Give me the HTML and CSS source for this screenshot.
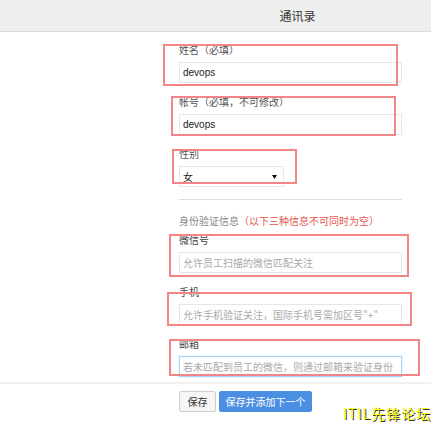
FILE: index.html
```html
<!DOCTYPE html>
<html lang="zh-CN">
<head>
<meta charset="utf-8">
<title>通讯录</title>
<link rel="stylesheet" href="styles.css">
</head>
<body>
<header class="topbar"><span class="title">通讯录</span></header>
<main class="form">
  <div class="group">
    <div class="mark m1"></div>
    <div class="label">姓名（必填）</div>
    <div class="input">devops</div>
  </div>
  <div class="group">
    <div class="mark m2"></div>
    <div class="label">帐号（必填，不可修改）</div>
    <div class="input">devops</div>
  </div>
  <div class="group">
    <div class="mark m3"></div>
    <div class="label">性别</div>
    <div class="select"><span>女</span><svg class="caret" width="5" height="4" viewBox="0 0 5 4"><path d="M0 0H5L2.5 4Z" fill="#111"/></svg></div>
  </div>
  <hr class="divider">
  <div class="section">身份验证信息<span class="warn">（以下三种信息不可同时为空）</span></div>
  <div class="group">
    <div class="mark m4"></div>
    <div class="label dark">微信号</div>
    <div class="input ph">允许员工扫描的微信匹配关注</div>
  </div>
  <div class="group">
    <div class="mark m5"></div>
    <div class="label dark">手机</div>
    <div class="input ph">允许手机验证关注，国际手机号需加区号"+"</div>
  </div>
  <div class="group">
    <div class="mark m6"></div>
    <div class="label dark">邮箱</div>
    <div class="input ph focus">若未匹配到员工的微信，则通过邮箱来验证身份</div>
  </div>
</main>
<footer class="footer">
  <button class="btn">保存</button>
  <button class="btn primary">保存并添加下一个</button>
</footer>
<div class="watermark">ITIL先锋论坛</div>
</body>
</html>
```
FILE: styles.css
```css
* { box-sizing: border-box; }
html, body { margin: 0; padding: 0; }
body {
  width: 431px;
  height: 425px;
  overflow: hidden;
  background: #fff;
  font-family: "Liberation Sans", "Noto Sans CJK SC", sans-serif;
  font-size: 10px;
  color: #333;
  position: relative;
}
.topbar {
  height: 32px;
  background: #efefef;
  border-bottom: 1px solid #dcdcdc;
  display: flex;
  align-items: center;
  justify-content: center;
  padding-left: 164px;
}
.title {
  font-family: "Noto Sans CJK SC", sans-serif;
  font-size: 12px;
  color: #333;
  margin-top: -1px;
}
.form {
  margin-left: 179px;
  width: 223px;
  padding-top: 11px;
}
.group {
  position: relative;
  margin-bottom: 12px;
}
.label {
  height: 14px;
  line-height: 14px;
  color: #555;
  margin-bottom: 5px;
  font-family: "Noto Sans CJK SC", sans-serif;
}
.label.dark { color: #444; }
.input {
  height: 21px;
  line-height: 19px;
  border: 1px solid #e6e6e6;
  padding-left: 3px;
  color: #222;
  white-space: nowrap;
  overflow: hidden;
}
.input.ph {
  color: #aaa;
  font-family: "Noto Sans CJK SC", sans-serif;
}
.input.focus {
  border-color: #a6d4f7;
  box-shadow: 0 0 2px #cfe8fb;
}
.select {
  width: 105px;
  height: 21px;
  border: 1px solid #e6e6e6;
  padding: 0 6px 0 3px;
  display: flex;
  align-items: center;
  justify-content: space-between;
  color: #222;
  font-family: "Noto Sans CJK SC", sans-serif;
}
.divider {
  border: 0;
  border-top: 1px solid #dedede;
  margin: 0 0 14px 0;
  height: 0;
}
.section {
  height: 14px;
  line-height: 14px;
  color: #888;
  margin-bottom: 5px;
  font-family: "Noto Sans CJK SC", sans-serif;
}
.warn { color: #e5564f; }
.mark {
  position: absolute;
  border: 2px solid #f28585;
  pointer-events: none;
}
.m1 { left: -16px; top: 1px; width: 235px; height: 42px; }
.m2 { left: -8px; top: 1px; width: 225px; height: 40px; }
.m3 { left: -7px; top: 2px; width: 125px; height: 35px; }
.m4 { left: -10px; top: 1px; width: 240px; height: 43px; }
.m5 { left: -12px; top: 7px; width: 245px; height: 34px; }
.m6 { left: -10px; top: 2px; width: 251px; height: 37px; }
.footer {
  margin-top: -7px;
  border-top: 2px solid #f1f1f1;
  padding: 7px 0 0 179px;
  display: flex;
  gap: 3px;
}
.btn {
  height: 21px;
  padding: 0;
  border: 1px solid #cfcfcf;
  background: #f6f6f6;
  color: #333;
  font-family: "Noto Sans CJK SC", sans-serif;
  font-size: 10px;
  border-radius: 2px;
  width: 37px;
  white-space: nowrap;
}
.btn.primary {
  width: 93px;
  background: #4b8fe2;
  border-color: #4b8fe2;
  color: #fff;
}
.watermark {
  position: absolute;
  left: 343px;
  top: 404px;
  font-family: "Noto Sans CJK SC", sans-serif;
  font-size: 14px;
  line-height: 18px;
  letter-spacing: 1px;
  color: #ffff00;
  text-shadow: 1px 1px 0 #333;
  white-space: nowrap;
}
```
